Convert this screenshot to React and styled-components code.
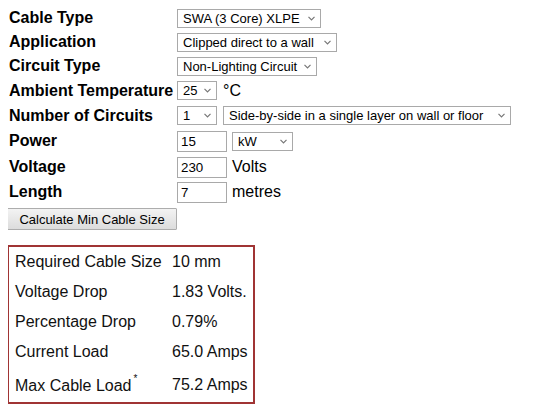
import React from "react";
import styled, { createGlobalStyle } from "styled-components";

const Global = createGlobalStyle`
  html, body { background: #fff; }
  body {
    margin: 8px;
    font-family: "Liberation Sans", Arial, sans-serif;
    color: #000;
  }
`;

const Form = styled.div`
  display: flex;
  flex-direction: column;
  margin-top: -2px;
  margin-left: 1px;
`;

const Row = styled.div`
  display: flex;
  align-items: center;
  height: ${(p) => p.$h || 24}px;
`;

const Label = styled.div`
  width: 168px;
  flex: none;
  font-size: 16px;
  font-weight: bold;
  white-space: nowrap;
`;

const Controls = styled.div`
  display: flex;
  align-items: center;
  gap: ${(p) => p.$gap || 6}px;
`;

const SelectBox = styled.div`
  position: relative;
  display: inline-flex;
  width: ${(p) => p.$w}px;
  height: 19px;
`;

const NativeSelect = styled.select`
  appearance: none;
  -webkit-appearance: none;
  box-sizing: border-box;
  width: 100%;
  height: 100%;
  margin: 0;
  border: 1px solid #a9a9a9;
  border-radius: 0;
  background: #fff;
  color: #000;
  font-family: "Liberation Sans", Arial, sans-serif;
  font-size: 13px;
  padding: 0 0 0 5px;
  outline: none;
`;

const Chevron = styled.svg`
  position: absolute;
  right: 6px;
  top: 7px;
  width: 7px;
  height: 5px;
  pointer-events: none;
`;

const TextInput = styled.input`
  box-sizing: border-box;
  width: 50px;
  height: 21px;
  margin: 0;
  border: 1px solid #a9a9a9;
  padding: 0 3px;
  font-family: "Liberation Sans", Arial, sans-serif;
  font-size: 13.33px;
  color: #000;
  background: #fff;
  outline: none;
`;

const Unit = styled.span`
  font-size: 16px;
  white-space: nowrap;
`;

const Button = styled.button`
  box-sizing: border-box;
  display: block;
  width: 170px;
  height: 22px;
  margin: 4px 0 0 -1px;
  padding: 0;
  border: 1px solid #adadad;
  border-radius: 1px;
  background: linear-gradient(#f3f3f3, #dcdcdc);
  font-family: "Liberation Sans", Arial, sans-serif;
  font-size: 13px;
  color: #000;
`;

const Results = styled.div`
  box-sizing: border-box;
  width: 248px;
  height: 159px;
  margin: 15px 0 0 -1px;
  border: 2px solid #a03434;
  padding: 0 0 0 6px;
  display: grid;
  grid-template-columns: 157px auto;
  grid-template-rows: 30px 30px 30px 30px 35px;
  align-items: center;
  font-size: 16px;
  color: #111;
`;

const Cell = styled.div`
  white-space: nowrap;
  padding-top: ${(p) => (p.$last ? 3 : 0)}px;
`;

const Star = styled.sup`
  font-size: 10px;
  position: relative;
  top: -3px;
  margin-left: 2px;
`;

function Select({ w, value, options }) {
  return (
    <SelectBox $w={w}>
      <NativeSelect defaultValue={value}>
        {(options || [value]).map((o) => (
          <option key={o}>{o}</option>
        ))}
      </NativeSelect>
      <Chevron viewBox="0 0 7 5">
        <polyline points="0.5,0.8 3.5,3.8 6.5,0.8" fill="none" stroke="#777" strokeWidth="1.2" />
      </Chevron>
    </SelectBox>
  );
}

export default function App() {
  return (
    <>
      <Global />
      <Form>
        <Row $h={24}>
          <Label>Cable Type</Label>
          <Controls>
            <Select w={144} value="SWA (3 Core) XLPE" />
          </Controls>
        </Row>
        <Row $h={24}>
          <Label>Application</Label>
          <Controls>
            <Select w={160} value="Clipped direct to a wall" />
          </Controls>
        </Row>
        <Row $h={24}>
          <Label>Circuit Type</Label>
          <Controls>
            <Select w={140} value="Non-Lighting Circuit" />
          </Controls>
        </Row>
        <Row $h={25}>
          <Label>Ambient Temperature</Label>
          <Controls>
            <Select w={40} value="25" />
            <Unit>°C</Unit>
          </Controls>
        </Row>
        <Row $h={25}>
          <Label>Number of Circuits</Label>
          <Controls>
            <Select w={40} value="1" />
            <Select w={288} value="Side-by-side in a single layer on wall or floor" />
          </Controls>
        </Row>
        <Row $h={26}>
          <Label>Power</Label>
          <Controls $gap={5}>
            <TextInput defaultValue="15" />
            <Select w={61} value="kW" />
          </Controls>
        </Row>
        <Row $h={26}>
          <Label>Voltage</Label>
          <Controls $gap={5}>
            <TextInput defaultValue="230" />
            <Unit>Volts</Unit>
          </Controls>
        </Row>
        <Row $h={24}>
          <Label>Length</Label>
          <Controls $gap={5}>
            <TextInput defaultValue="7" />
            <Unit>metres</Unit>
          </Controls>
        </Row>
      </Form>
      <Button>Calculate Min Cable Size</Button>
      <Results>
        <Cell>Required Cable Size</Cell>
        <Cell>10 mm</Cell>
        <Cell>Voltage Drop</Cell>
        <Cell>1.83 Volts.</Cell>
        <Cell>Percentage Drop</Cell>
        <Cell>0.79%</Cell>
        <Cell>Current Load</Cell>
        <Cell>65.0 Amps</Cell>
        <Cell $last>
          Max Cable Load<Star>*</Star>
        </Cell>
        <Cell>75.2 Amps</Cell>
      </Results>
    </>
  );
}
